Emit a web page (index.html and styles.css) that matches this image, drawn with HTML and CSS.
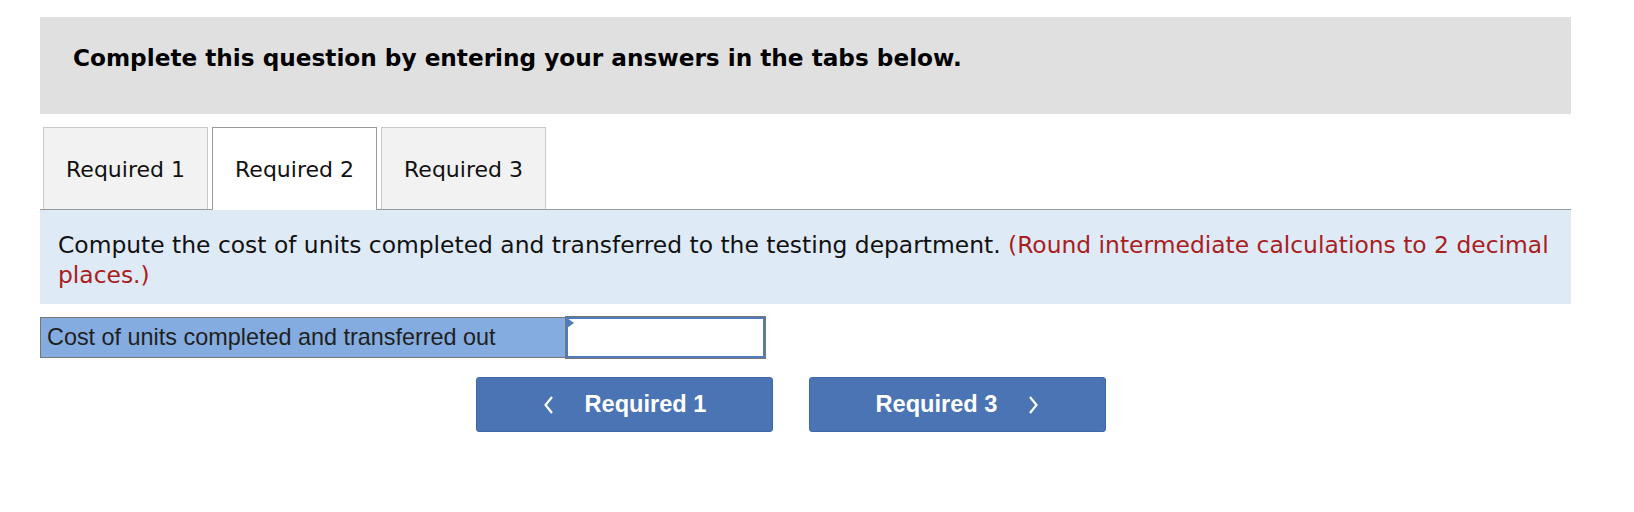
FILE: index.html
```html
<!DOCTYPE html>
<html lang="en">
<head>
<meta charset="utf-8">
<title>Question</title>
<link rel="stylesheet" href="styles.css">
</head>
<body>
<div class="page">
  <div class="header">
    <h2 class="header-title">Complete this question by entering your answers in the tabs below.</h2>
  </div>

  <div class="tabs">
    <div class="tab">Required 1</div>
    <div class="tab tab-active">Required 2</div>
    <div class="tab">Required 3</div>
  </div>

  <div class="panel">
    <p class="panel-text">Compute the cost of units completed and transferred to the testing department. <span class="hint">(Round intermediate calculations to 2 decimal places.)</span></p>
  </div>

  <div class="answer-row">
    <div class="answer-label">Cost of units completed and transferred out</div>
    <div class="answer-input">
      <span class="flag"></span>
    </div>
  </div>

  <div class="nav">
    <button class="nav-btn" type="button">
      <svg class="chev" width="11" height="20" viewBox="0 0 11 20"><polyline points="9,2 2.5,10 9,18" fill="none" stroke="#fff" stroke-width="2.2"/></svg>
      <span>Required 1</span>
    </button>
    <button class="nav-btn" type="button">
      <span>Required 3</span>
      <svg class="chev" width="11" height="20" viewBox="0 0 11 20"><polyline points="2,2 8.5,10 2,18" fill="none" stroke="#fff" stroke-width="2.2"/></svg>
    </button>
  </div>
</div>
</body>
</html>
```

FILE: styles.css
```css
* { box-sizing: border-box; }

html, body {
  margin: 0;
  padding: 0;
  background: #ffffff;
}

.page {
  width: 1531px;
  margin-left: 40px;
  padding-top: 17px;
}

.header {
  background: #e0e0e0;
  height: 97px;
  padding: 27px 0 0 33px;
}

.header-title {
  margin: 0;
  font-family: "DejaVu Sans", Verdana, sans-serif;
  font-weight: bold;
  font-size: 23.2px;
  line-height: 28px;
  color: #000;
}

.tabs {
  display: flex;
  gap: 4px;
  margin-top: 13px;
  padding-left: 3px;
  border-bottom: 1px solid #9a9a9a;
  height: 83px;
}

.tab {
  width: 165px;
  height: 82px;
  display: flex;
  align-items: center;
  justify-content: center;
  background: #f2f2f2;
  border: 1px solid #c8c8c8;
  border-bottom: none;
  font-family: "DejaVu Sans", Verdana, sans-serif;
  font-size: 22px;
  color: #111;
  padding-top: 2px;
}

.tab-active {
  background: #ffffff;
  border-color: #9a9a9a;
  height: 83px;
  margin-bottom: -1px;
  padding-top: 1px;
  padding-bottom: 1px;
}

.panel {
  background: #dfeaf7;
  height: 94px;
  padding: 20px 10px 0 18px;
}

.panel-text {
  margin: 0;
  font-family: "DejaVu Sans", Verdana, sans-serif;
  font-size: 23.4px;
  line-height: 30px;
  color: #111;
}

.hint {
  color: #a8201d;
}

.answer-row {
  display: flex;
  margin-top: 13px;
  width: 725px;
  height: 41px;
}

.answer-label {
  width: 526px;
  background: #84ace0;
  border: 1px solid #777;
  border-right: none;
  padding: 0 6px;
  font-family: "Liberation Sans", Arial, sans-serif;
  font-size: 23.4px;
  line-height: 39px;
  color: #1f1f1f;
}

.answer-input {
  position: relative;
  flex: 1;
  background: #fff;
  border: 2px solid #4f7bbd;
  outline: 1px solid #777;
}

.flag {
  position: absolute;
  left: -1px;
  top: -1px;
  width: 0;
  height: 0;
  border-top: 5px solid transparent;
  border-bottom: 5px solid transparent;
  border-left: 7px solid #4f7bbd;
}

.nav {
  display: flex;
  gap: 36px;
  margin-top: 19px;
  padding-left: 436px;
}

.nav-btn {
  width: 297px;
  height: 55px;
  display: flex;
  align-items: center;
  justify-content: center;
  gap: 31px;
  background: #4a74b4;
  border: 1px solid #3f68a8;
  border-radius: 3px;
  color: #fff;
  font-family: "Liberation Sans", Arial, sans-serif;
  font-weight: bold;
  font-size: 23.6px;
  padding: 0;
}

.chev {
  display: block;
}
```
